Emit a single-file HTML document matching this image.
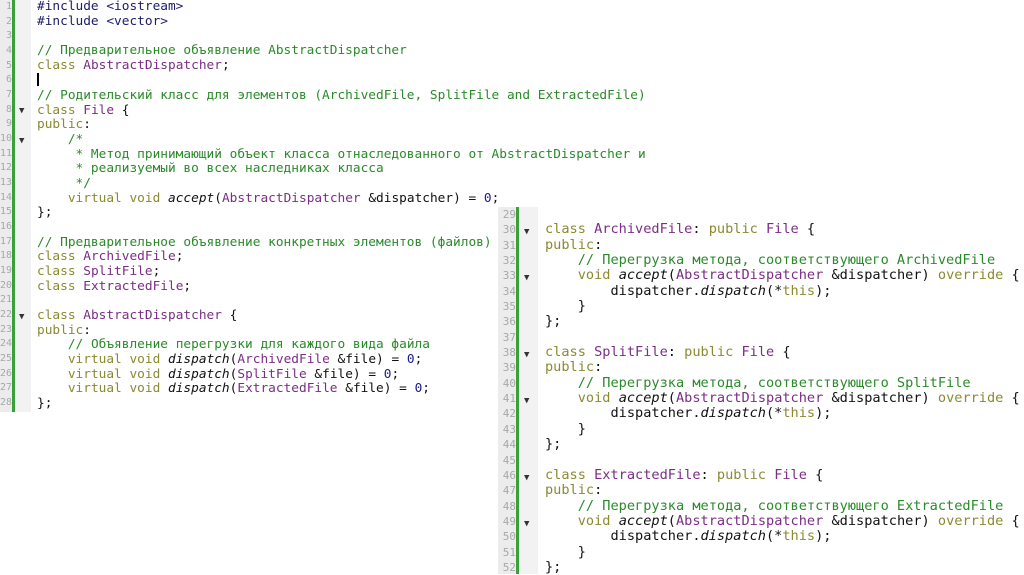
<!DOCTYPE html><html><head><meta charset="utf-8"><style>
body{margin:0;width:1024px;height:574px;background:#fff;overflow:hidden;position:relative;font-family:"DejaVu Sans Mono","Liberation Mono",monospace;}
.p{position:absolute;}
.ln{position:absolute;left:0;top:0;text-align:right;color:#a8a8a8;background:#ececec;}
.bar{position:absolute;top:0;background:#3aa03a;}
.g{position:absolute;top:0;background:#f2f2f2;}
.code{position:absolute;top:0;white-space:pre;color:#111;}
.k{color:#8a8a30}.c{color:#7b2d85}.m{color:#2a8a2a}.n{color:#1c1c8a}.i{font-style:italic}.inc{color:#1c1c6a}
.ar{position:absolute;font-size:9px;color:#333;}
.cur{display:inline-block;width:2px;height:13px;background:#000;vertical-align:-2px;}
</style></head><body>
<div class="p" id="L" style="left:0;top:0px;width:500px;height:412px;font-size:12.8px;line-height:14.67px;">
<div class="ln" style="width:12px;height:412px;font-size:10px;">1<br>2<br>3<br>4<br>5<br>6<br>7<br>8<br>9<br>10<br>11<br>12<br>13<br>14<br>15<br>16<br>17<br>18<br>19<br>20<br>21<br>22<br>23<br>24<br>25<br>26<br>27<br>28</div>
<div class="bar" style="left:12px;width:3px;height:412px;"></div>
<div class="g" style="left:15px;width:16px;height:412px;"></div>
<div class="ar" style="left:19px;top:104px">▼</div><div class="ar" style="left:19px;top:134px">▼</div><div class="ar" style="left:19px;top:310px">▼</div>
<div class="code" style="left:37px;"><span class="inc">#include &lt;iostream&gt;</span>
<span class="inc">#include &lt;vector&gt;</span>

<span class="m">// Предварительное объявление AbstractDispatcher</span>
<span class="k">class</span> <span class="c">AbstractDispatcher</span>;
<span class="cur"></span>
<span class="m">// Родительский класс для элементов (ArchivedFile, SplitFile and ExtractedFile)</span>
<span class="k">class</span> <span class="c">File</span> {
<span class="k">public</span>:
    <span class="m">/*</span>
<span class="m">     * Метод принимающий объект класса отнаследованного от AbstractDispatcher и</span>
<span class="m">     * реализуемый во всех наследниках класса</span>
<span class="m">     */</span>
    <span class="k">virtual void</span> <span class="i">accept</span>(<span class="c">AbstractDispatcher</span> &amp;dispatcher) = <span class="n">0</span>;
};

<span class="m">// Предварительное объявление конкретных элементов (файлов)</span>
<span class="k">class</span> <span class="c">ArchivedFile</span>;
<span class="k">class</span> <span class="c">SplitFile</span>;
<span class="k">class</span> <span class="c">ExtractedFile</span>;

<span class="k">class</span> <span class="c">AbstractDispatcher</span> {
<span class="k">public</span>:
    <span class="m">// Объявление перегрузки для каждого вида файла</span>
    <span class="k">virtual void</span> <span class="i">dispatch</span>(<span class="c">ArchivedFile</span> &amp;file) = <span class="n">0</span>;
    <span class="k">virtual void</span> <span class="i">dispatch</span>(<span class="c">SplitFile</span> &amp;file) = <span class="n">0</span>;
    <span class="k">virtual void</span> <span class="i">dispatch</span>(<span class="c">ExtractedFile</span> &amp;file) = <span class="n">0</span>;
};</div></div>
<div class="p" id="R" style="left:498px;top:207px;width:526px;height:367px;background:#fff;font-size:13.6px;line-height:15.35px;">
<div class="ln" style="width:18px;height:367px;font-size:11px;">29<br>30<br>31<br>32<br>33<br>34<br>35<br>36<br>37<br>38<br>39<br>40<br>41<br>42<br>43<br>44<br>45<br>46<br>47<br>48<br>49<br>50<br>51<br>52</div>
<div class="bar" style="left:18px;width:3px;height:367px;"></div>
<div class="g" style="left:21px;width:19px;height:367px;"></div>
<div class="ar" style="left:26px;top:18px">▼</div><div class="ar" style="left:26px;top:64px">▼</div><div class="ar" style="left:26px;top:141px">▼</div><div class="ar" style="left:26px;top:187px">▼</div><div class="ar" style="left:26px;top:264px">▼</div><div class="ar" style="left:26px;top:310px">▼</div>
<div class="code" style="left:47px;">
<span class="k">class</span> <span class="c">ArchivedFile</span>: <span class="k">public</span> <span class="c">File</span> {
<span class="k">public</span>:
    <span class="m">// Перегрузка метода, соответствующего ArchivedFile</span>
    <span class="k">void</span> <span class="i">accept</span>(<span class="c">AbstractDispatcher</span> &amp;dispatcher) <span class="k">override</span> {
        dispatcher.<span class="i">dispatch</span>(*<span class="k">this</span>);
    }
};

<span class="k">class</span> <span class="c">SplitFile</span>: <span class="k">public</span> <span class="c">File</span> {
<span class="k">public</span>:
    <span class="m">// Перегрузка метода, соответствующего SplitFile</span>
    <span class="k">void</span> <span class="i">accept</span>(<span class="c">AbstractDispatcher</span> &amp;dispatcher) <span class="k">override</span> {
        dispatcher.<span class="i">dispatch</span>(*<span class="k">this</span>);
    }
};

<span class="k">class</span> <span class="c">ExtractedFile</span>: <span class="k">public</span> <span class="c">File</span> {
<span class="k">public</span>:
    <span class="m">// Перегрузка метода, соответствующего ExtractedFile</span>
    <span class="k">void</span> <span class="i">accept</span>(<span class="c">AbstractDispatcher</span> &amp;dispatcher) <span class="k">override</span> {
        dispatcher.<span class="i">dispatch</span>(*<span class="k">this</span>);
    }
};</div></div>
</body></html>
